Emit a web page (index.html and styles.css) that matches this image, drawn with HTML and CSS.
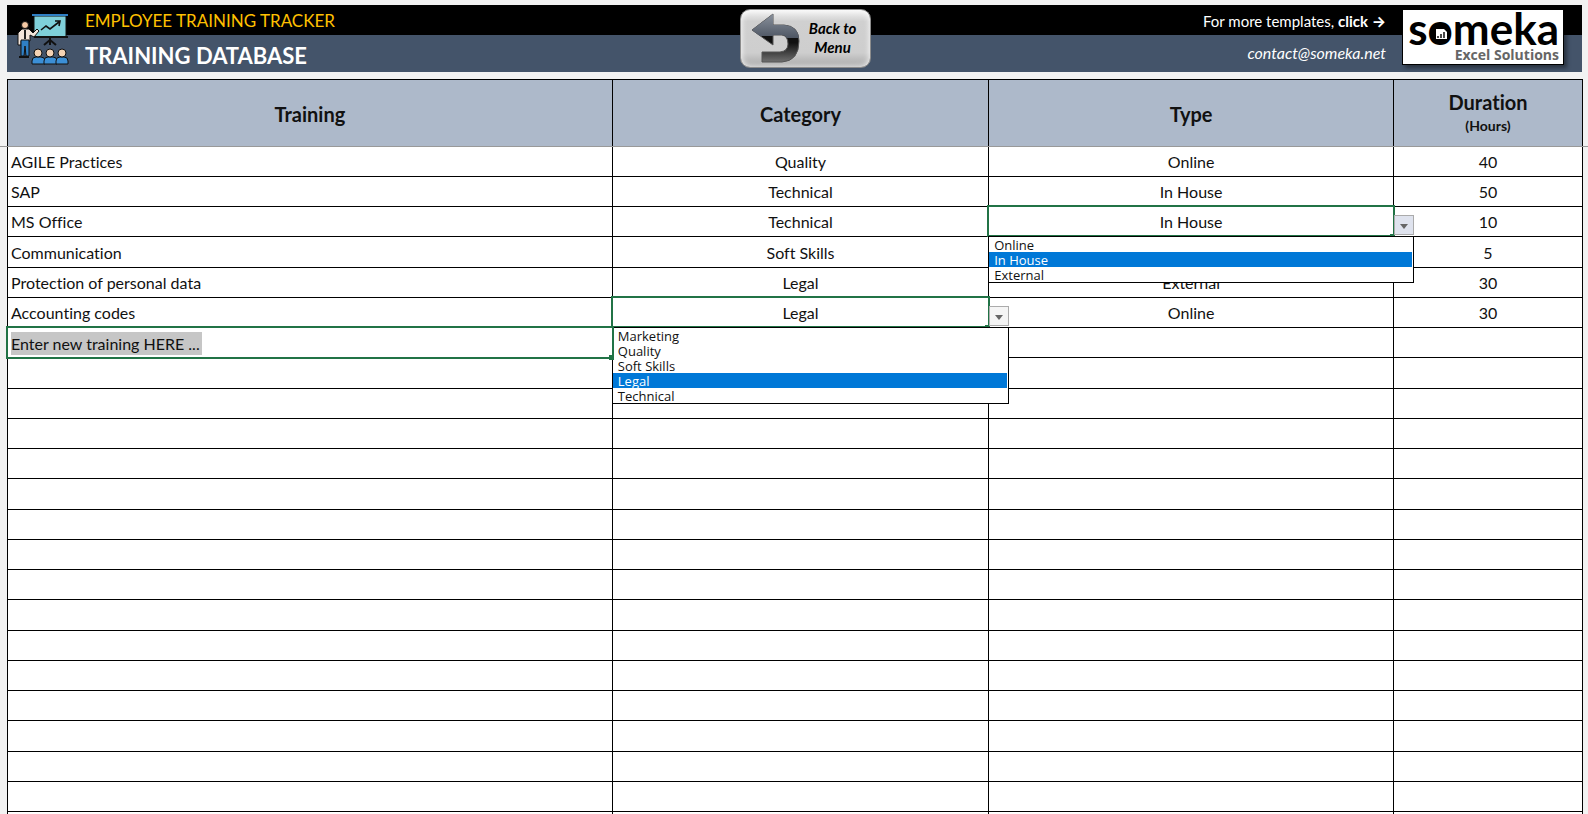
FILE: index.html
```html
<!DOCTYPE html>
<html lang="en">
<head>
  <meta charset="UTF-8">
  <title>Employee Training Tracker</title>
  <link rel="stylesheet" href="styles.css">
</head>
<body>

<div class="sheet">
  <header class="topbar">
    <div class="brand">
      <svg class="brand-icon" viewBox="0 0 52 52" aria-hidden="true">
        <!-- board -->
        <path d="M17 3h32v21H17z" fill="#7fd0da" stroke="#111" stroke-width="1"/>
        <path d="M15 1h36v2H15z" fill="#2f7fc4"/>
        <path d="M17 24h34" stroke="#111" stroke-width="2"/>
        <path d="M33 25v7M33 27l-6 5M33 27l6 5" stroke="#111" stroke-width="2" fill="none"/>
        <path d="M24 17l5-4 4 3 9-7M38 8l5 0 -1 5" stroke="#111" stroke-width="1.6" fill="none"/>
        <!-- trainer -->
        <path d="M1 20l4-4h7l4 4 4-4 2 2-5 6-4-2v6H4v4H1z" fill="#f4e6dc" stroke="#111" stroke-width="1"/>
        <path d="M4 27h8v16H9l-1-10-1 10H4z" fill="#2f7fc4" stroke="#111" stroke-width="1"/>
        <path d="M2 44h10" stroke="#111" stroke-width="2"/>
        <path d="M8 17v9" stroke="#222" stroke-width="2"/>
        <circle cx="8" cy="12" r="3.5" fill="#f6c9a4" stroke="#111"/>
        <!-- audience -->
        <g stroke="#111" stroke-width="1">
          <path d="M15 51v-3q0-4 4-4h5q4 0 4 4v3z" fill="#3c8fd6"/>
          <path d="M27 51v-3q0-4 4-4h5q4 0 4 4v3z" fill="#3c8fd6"/>
          <path d="M39 51v-3q0-4 4-4h4q4 0 4 4v3z" fill="#3c8fd6"/>
          <circle cx="21" cy="40" r="4" fill="#f6d3b4"/>
          <circle cx="33" cy="40" r="4" fill="#f6d3b4"/>
          <circle cx="45" cy="40" r="4" fill="#f6d3b4"/>
        </g>
      </svg>
      <div class="titles">
        <div class="product">EMPLOYEE TRAINING TRACKER</div>
        <h1>TRAINING DATABASE</h1>
      </div>
    </div>

    <button class="back-btn" type="button">
      <svg class="back-icon" viewBox="0 0 50 50" aria-hidden="true">
        <defs>
          <linearGradient id="arrowTop" x1="0" y1="0" x2="0" y2="1">
            <stop offset="0" stop-color="#8a919c"/>
            <stop offset="1" stop-color="#4e5663"/>
          </linearGradient>
          <linearGradient id="arrowBottom" x1="0" y1="0" x2="0" y2="1">
            <stop offset="0.6" stop-color="#111"/>
            <stop offset="1" stop-color="#707070"/>
          </linearGradient>
        </defs>
        <path d="M1 17L22 1v11h11q15 1 15 16 0 20-17 21H11V39h18q8-1 8-8 0-8-6-9h-9v10z" fill="url(#arrowBottom)" stroke="#555" stroke-width="1"/>
        <path d="M1 17L22 1v11h11q13 1 15 13h-12q-2-3-5-3h-9v1H9z" fill="url(#arrowTop)"/>
      </svg>
      <span>Back to<br>Menu</span>
    </button>

    <div class="contact">
      <div class="links">
        <a class="more" href="#">For more templates, <b>click <span class="arrow">→</span></b></a>
        <a class="mail" href="mailto:contact@someka.net">contact@someka.net</a>
      </div>
      <a class="logo" href="#">
        <span class="logo-name">s<span class="logo-o">o<svg viewBox="0 0 20 20" aria-hidden="true">
          <circle cx="10" cy="10" r="9" fill="#000"/>
          <path d="M5 5h8l3 3v7H5z" fill="#fff"/>
          <path d="M7 12v2M10 10v4M13 8v6" stroke="#000" stroke-width="1.4"/>
        </svg></span>meka</span>
        <span class="logo-sub">Excel Solutions</span>
      </a>
    </div>
  </header>

  <div class="grid-wrap">
    <table class="grid">
      <colgroup>
        <col class="col-training">
        <col class="col-category">
        <col class="col-type">
        <col class="col-duration">
      </colgroup>
      <thead>
        <tr>
          <th>Training</th>
          <th>Category</th>
          <th>Type</th>
          <th>Duration<small>(Hours)</small></th>
        </tr>
      </thead>
      <tbody>
        <tr><td>AGILE Practices</td><td>Quality</td><td>Online</td><td>40</td></tr>
        <tr><td>SAP</td><td>Technical</td><td>In House</td><td>50</td></tr>
        <tr>
          <td>MS Office</td>
          <td>Technical</td>
          <td class="active">In House
            <button class="drop-btn hot" type="button" aria-label="Open type list"></button>
            <select class="drop-list" size="3" aria-label="Type">
              <option>Online</option>
              <option selected>In House</option>
              <option>External</option>
            </select>
          </td>
          <td>10</td>
        </tr>
        <tr><td>Communication</td><td>Soft Skills</td><td></td><td>5</td></tr>
        <tr><td>Protection of personal data</td><td>Legal</td><td>External</td><td>30</td></tr>
        <tr>
          <td>Accounting codes</td>
          <td class="active">Legal
            <button class="drop-btn" type="button" aria-label="Open category list"></button>
            <select class="drop-list" size="5" aria-label="Category">
              <option>Marketing</option>
              <option>Quality</option>
              <option>Soft Skills</option>
              <option selected>Legal</option>
              <option>Technical</option>
            </select>
          </td>
          <td>Online</td>
          <td>30</td>
        </tr>
        <tr>
          <td class="active entry"><input class="new-training" type="text" aria-label="New training" value="Enter new training HERE ..."></td>
          <td></td><td></td><td></td>
        </tr>
        <tr><td></td><td></td><td></td><td></td></tr>
        <tr><td></td><td></td><td></td><td></td></tr>
        <tr><td></td><td></td><td></td><td></td></tr>
        <tr><td></td><td></td><td></td><td></td></tr>
        <tr><td></td><td></td><td></td><td></td></tr>
        <tr><td></td><td></td><td></td><td></td></tr>
        <tr><td></td><td></td><td></td><td></td></tr>
        <tr><td></td><td></td><td></td><td></td></tr>
        <tr><td></td><td></td><td></td><td></td></tr>
        <tr><td></td><td></td><td></td><td></td></tr>
        <tr><td></td><td></td><td></td><td></td></tr>
        <tr><td></td><td></td><td></td><td></td></tr>
        <tr><td></td><td></td><td></td><td></td></tr>
        <tr><td></td><td></td><td></td><td></td></tr>
        <tr><td></td><td></td><td></td><td></td></tr>
        <tr><td></td><td></td><td></td><td></td></tr>
      </tbody>
    </table>
  </div>
</div>

</body>
</html>
```
FILE: styles.css
```css
* {
  box-sizing: border-box;
}

body {
  margin: 0;
  background: #f2f2f2;
  color: #111;
  font-family: Lato, "Open Sans", sans-serif;
  font-size: 16px;
  font-variant-ligatures: none;
}

.sheet {
  height: 100vh;
  overflow: hidden;
  padding-top: 5px;
}

/* top bar */
.topbar {
  display: grid;
  grid-template-columns: 34fr 131px 33fr;
  grid-template-rows: 67px;
  margin: 0 6px 0 7px;
  background: linear-gradient(#000 30px, #44546a 30px);
  color: #fff;
}

.brand {
  display: flex;
  align-items: center;
  gap: 16px;
  padding-left: 10px;
}

.brand-icon {
  width: 52px;
  height: 52px;
}

.titles {
  align-self: stretch;
}

.product {
  color: #ffc000;
  font-size: 17px;
  line-height: 31px;
}

h1 {
  margin: 0;
  font-size: 22px;
  line-height: 40px;
}

.back-btn {
  display: flex;
  align-items: center;
  gap: 8px;
  margin: 4px 0;
  padding: 0 10px 2px;
  border: 1px solid #8c8c8c;
  border-radius: 10px;
  background: linear-gradient(#f4f4f4, #d0d0d0 20%, #cecece 75%, #a8a8a8);
  box-shadow: inset 0 0 6px #fff;
  color: #000;
  font: italic bold 15px/19px Lato, sans-serif;
}

.back-icon {
  width: 50px;
  height: 50px;
}

.contact {
  display: flex;
  justify-content: flex-end;
  gap: 16px;
  padding-right: 18px;
}

.links {
  display: flex;
  flex-direction: column;
  text-align: right;
}

.links a {
  color: #fff;
  font-size: 15px;
  line-height: 33px;
  text-decoration: none;
}

.links .mail {
  font-size: 16px;
  font-style: italic;
  line-height: 29px;
}

.arrow {
  font-family: Inter, sans-serif;
}

.logo {
  display: flex;
  flex-direction: column;
  align-items: flex-end;
  align-self: flex-start;
  width: 162px;
  height: 56px;
  margin-top: 4px;
  padding-right: 4px;
  background: #fff;
  border: 1px solid #000;
  box-shadow: 3px 3px 4px rgba(0, 0, 0, 0.4);
  color: #000;
  text-decoration: none;
}

.logo-name {
  font-size: 44px;
  font-weight: bold;
  line-height: 36px;
}

.logo-o {
  position: relative;
}

.logo-o svg {
  position: absolute;
  left: 3px;
  bottom: 10px;
  width: 20px;
  height: 20px;
}

.logo-sub {
  color: #666;
  font: bold 14px/18px "Open Sans", sans-serif;
}

/* table */
.grid-wrap {
  position: relative;
  margin-top: 7px;
  padding: 0 5px 0 7px;
}

/* freeze pane line */
.grid-wrap::after {
  content: "";
  position: absolute;
  top: 67px;
  left: 0;
  right: 0;
  height: 1px;
  background: #999;
}

.grid {
  width: 100%;
  table-layout: fixed;
  border-collapse: separate;
  border-spacing: 0;
  border-top: 1px solid #000;
  border-left: 1px solid #000;
  background: #fff;
}

.col-training { width: 38.4%; }
.col-category { width: 23.9%; }
.col-type { width: 25.7%; }
.col-duration { width: 12%; }

.grid th {
  height: 67px;
  padding: 0;
  background: #adb9ca;
  border-right: 1px solid #000;
  font-size: 20px;
  line-height: 24px;
}

.grid th small {
  display: block;
  font-size: 14px;
}

.grid td {
  height: 30px;
  padding: 1px 3px 0;
  border-right: 1px solid #000;
  border-bottom: 1px solid #000;
  font-size: 16px;
  line-height: 20px;
  text-align: center;
}

.grid tr:nth-child(4n) td {
  height: 31px;
}

.grid td:first-child {
  text-align: left;
}

/* selected cell */
.grid .active {
  position: relative;
}

.active::before {
  content: "";
  position: absolute;
  inset: -2px -2px -1px -2px;
  border: 2px solid #217346;
  pointer-events: none;
}

.active::after {
  content: "";
  position: absolute;
  right: -2px;
  bottom: -2px;
  width: 5px;
  height: 4px;
  background: #217346;
}

/* the row being typed in stays above the open list */
.entry::before,
.entry::after {
  z-index: 4;
}

.entry::before {
  bottom: -2px;
}

.entry::after {
  bottom: -3px;
  height: 5px;
}

.drop-btn {
  position: absolute;
  z-index: 2;
  left: 100%;
  bottom: 1px;
  width: 20px;
  height: 20px;
  margin-left: 1px;
  padding: 0;
  border: 1px solid #ababab;
  background: #f5f5f5;
}

.drop-btn.hot {
  background: #dfe3ee;
}

.drop-btn::before {
  content: "";
  display: block;
  width: 0;
  margin: 2px auto 0;
  border: 4px solid transparent;
  border-top: 5px solid #666;
  border-bottom: 0;
}

.drop-list {
  position: absolute;
  z-index: 3;
  top: 100%;
  left: -1px;
  width: calc(100% + 22px);
  padding: 0;
  border: 1px solid #000;
  border-radius: 0;
  outline: none;
  overflow: hidden;
  background: #fff;
  color: #111;
  font: 13px/15px "Open Sans", sans-serif;
}

.drop-list option {
  display: flex;
  align-items: center;
  height: 15px;
  min-height: 15px;
  margin-right: 1px;
  padding: 0 5px;
  line-height: 15px;
  overflow: visible;
}

.drop-list option:checked {
  background: #0078d7 linear-gradient(#0078d7, #0078d7);
  -webkit-text-fill-color: #fff;
}

.new-training {
  display: block;
  width: 191px;
  height: 23px;
  padding: 0;
  border: none;
  background: #c6c6c6;
  color: #111;
  font: 16px/23px Lato, sans-serif;
}
```
